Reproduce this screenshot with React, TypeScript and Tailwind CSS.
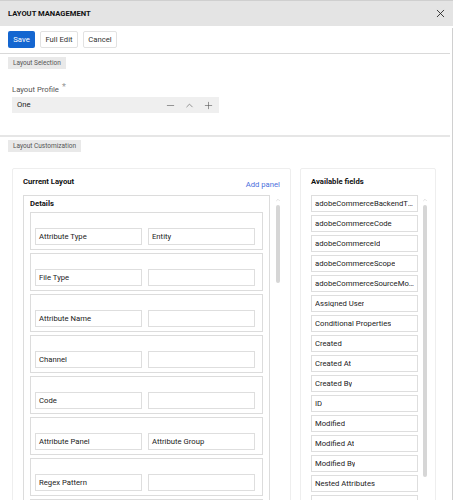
import { X, Minus, Plus, ChevronUp } from 'lucide-react'

const layoutRows: [string, string][] = [
  ['Attribute Type', 'Entity'],
  ['File Type', ''],
  ['Attribute Name', ''],
  ['Channel', ''],
  ['Code', ''],
  ['Attribute Panel', 'Attribute Group'],
  ['Regex Pattern', ''],
  ['', ''],
]

const availableFields = [
  'adobeCommerceBackendType',
  'adobeCommerceCode',
  'adobeCommerceId',
  'adobeCommerceScope',
  'adobeCommerceSourceModel',
  'Assigned User',
  'Conditional Properties',
  'Created',
  'Created At',
  'Created By',
  'ID',
  'Modified',
  'Modified At',
  'Modified By',
  'Nested Attributes',
  'Owner',
  'Path',
]

function Tag({ label }: { label: string }) {
  return (
    <div className="flex h-[12px] w-fit items-center bg-[#e9e9e9] px-[5px] text-[6.5px] leading-none text-[#555]">
      {label}
    </div>
  )
}

function ScrollBar({ thumb }: { thumb: number }) {
  return (
    <div className="flex w-[5px] shrink-0 flex-col items-center">
      <ChevronUp size={6} strokeWidth={2} className="mt-[2px] text-[#c4c4c4]" />
      <div className="mt-[2px] w-[4px] rounded-full bg-[#d6d6d6]" style={{ height: thumb }} />
    </div>
  )
}

function FieldBox({ text }: { text: string }) {
  return (
    <div className="flex h-[17px] w-[107px] items-center border border-[#dedede] bg-white px-[3px] text-[7.7px] leading-none text-[#222]">
      {text}
    </div>
  )
}

export default function App() {
  return (
    <div
      className="flex h-[500px] w-[453px] flex-col overflow-hidden bg-white text-[#222]"
      style={{ fontFamily: 'Roboto, "Liberation Sans", sans-serif' }}
    >
      {/* header */}
      <div className="flex h-[26px] shrink-0 items-center justify-between border-t border-[#cfcfcf] bg-[#e4e4e4] pl-2 pr-[6px]">
        <span className="text-[7.6px] font-bold text-[#111]">LAYOUT MANAGEMENT</span>
        <X size={13} strokeWidth={1.6} className="text-[#222]" />
      </div>

      <div className="flex min-h-0 flex-1">
        <div className="flex w-[450px] flex-col">
          {/* toolbar */}
          <div className="flex h-[28px] shrink-0 items-center gap-[5px] border-b border-[#d9d9d9] pl-2">
            <button className="h-[17px] w-[27px] rounded-[2px] bg-[#1466d0] text-[7.7px] text-white">Save</button>
            <button className="h-[17px] w-[38px] rounded-[2px] border border-[#e2e2e2] bg-white text-[7.7px] text-[#333]">
              Full Edit
            </button>
            <button className="h-[17px] w-[34px] rounded-[2px] border border-[#e2e2e2] bg-white text-[7.7px] text-[#333]">
              Cancel
            </button>
          </div>

          {/* layout selection */}
          <div className="h-[83px] shrink-0 border-b-2 border-[#e6e6e6] pl-2 pt-[3px]">
            <Tag label="Layout Selection" />
            <div className="ml-1 mt-[16px] flex h-[10px] items-start text-[7.7px] leading-[10px] text-[#555]">
              Layout Profile
              <span className="ml-[3px] -mt-[3px] text-[9px] text-[#999]">*</span>
            </div>
            <div className="ml-1 mt-[2px] flex h-[16px] w-[207px] items-center justify-between bg-[#efefef] pl-[5px] pr-[5px] text-[7.7px] text-[#222]">
              <span>One</span>
              <div className="flex items-center gap-[8px] text-[#555]">
                <Minus size={11} strokeWidth={1.3} />
                <ChevronUp size={11} strokeWidth={1.3} />
                <Plus size={11} strokeWidth={1.3} />
              </div>
            </div>
          </div>

          {/* layout customization */}
          <div className="min-h-0 flex-1 pl-2 pt-[3px]">
            <Tag label="Layout Customization" />
            <div className="ml-1 mt-[16px] flex gap-[9px]">
              {/* current layout */}
              <div className="w-[279px] rounded-t-[2px] border border-[#eeeeee] px-[10px]">
                <div className="flex h-[26px] items-center justify-between">
                  <span className="text-[7.7px] font-bold text-[#111]">Current Layout</span>
                  <span className="mt-[5px] text-[7.7px] text-[#4b6fdc]">Add panel</span>
                </div>
                <div className="flex gap-[5px]">
                  <div className="w-[250px] border border-[#dcdcdc] px-[6px]">
                    <div className="flex h-[16px] items-center text-[7.7px] font-bold text-[#111]">Details</div>
                    <div className="flex flex-col gap-[3px]">
                      {layoutRows.map(([a, b], i) => (
                        <div key={i} className="flex gap-[6px] border border-[#dcdcdc] pb-[4px] pl-[4px] pt-[15px]">
                          <FieldBox text={a} />
                          <FieldBox text={b} />
                        </div>
                      ))}
                    </div>
                  </div>
                  <ScrollBar thumb={78} />
                </div>
              </div>

              {/* available fields */}
              <div className="w-[136px] rounded-t-[2px] border border-[#eeeeee] pl-[10px]">
                <div className="flex h-[26px] items-center text-[7.7px] font-bold text-[#111]">Available fields</div>
                <div className="flex gap-[4px]">
                  <div className="flex w-[107px] flex-col gap-[3px]">
                    {availableFields.map((f) => (
                      <div
                        key={f}
                        className="flex h-[17px] items-center border border-[#dedede] bg-white px-[3px] text-[7.7px] leading-none text-[#222]"
                      >
                        <span className="truncate">{f}</span>
                      </div>
                    ))}
                  </div>
                  <ScrollBar thumb={272} />
                </div>
              </div>
            </div>
          </div>
        </div>
        <div className="mt-[2px] w-[3px] border-r border-[#d0d0d0]" />
      </div>
    </div>
  )
}
